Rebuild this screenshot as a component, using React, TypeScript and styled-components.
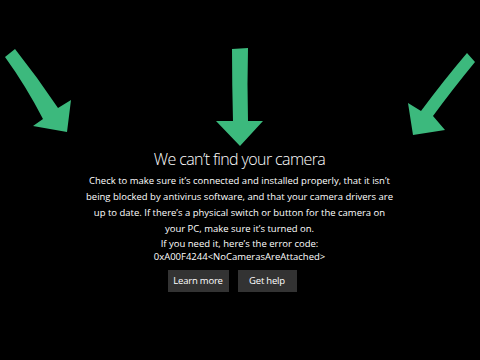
import React from "react";
import styled, { createGlobalStyle } from "styled-components";

const GlobalStyle = createGlobalStyle`
  html, body {
    margin: 0;
    padding: 0;
    background-color: #000;
  }
  body {
    font-family: "Open Sans", "Noto Sans", sans-serif;
    color: #fff;
  }
`;

const Arrows = () => (
  <ArrowSvg width="480" height="150" viewBox="0 0 480 150">
    {/* left arrow */}
    <path d="M5 57 L15 49 Q38 78 58 108 L71 100 L67 132 L33 126 L43 119 Q26 86 5 57 Z" />
    {/* middle arrow */}
    <path d="M232 49 L248 48 Q247 84 248 121 L263 121 L240 146 L216 121 L233 121 Q232 84 232 49 Z" />
    {/* right arrow */}
    <path d="M467 53 L475 62 Q452 90 433 116 L445 130 L413 135 L408 103 L421 111 Q444 80 467 53 Z" />
  </ArrowSvg>
);

const App = () => {
  return (
    <Screen>
      <GlobalStyle />
      <Arrows />
      <Message>
        <Title>We can’t find your camera</Title>
        <Body>
          Check to make sure it’s connected and installed properly, that it isn’t
          <br />
          being blocked by antivirus software, and that your camera drivers are
          <br />
          up to date. If there’s a physical switch or button for the camera on
          <br />
          your PC, make sure it’s turned on.
        </Body>
        <ErrorCode>
          If you need it, here’s the error code:
          <br />
          0xA00F4244&lt;NoCamerasAreAttached&gt;
        </ErrorCode>
        <Buttons>
          <Button $w={61}>Learn more</Button>
          <Button $w={59}>Get help</Button>
        </Buttons>
      </Message>
    </Screen>
  );
};

export default App;

const Screen = styled.div`
  width: 480px;
  height: 360px;
  background-color: #000;
  display: flex;
  flex-direction: column;
  overflow: hidden;
`;

const ArrowSvg = styled.svg`
  display: block;
  flex-shrink: 0;
  fill: #3cb97d;
`;

const Message = styled.div`
  display: flex;
  flex-direction: column;
  align-items: center;
  text-align: center;
  margin-left: -1px;
`;

const Title = styled.h1`
  margin: -1px 0 0;
  font-size: 16px;
  font-weight: 300;
  letter-spacing: -0.6px;
  line-height: 20px;
`;

const Body = styled.p`
  margin: 4px 0 0;
  font-size: 9.5px;
  line-height: 16px;
`;

const ErrorCode = styled.p`
  margin: -0.5px 0 0;
  font-size: 9.5px;
  line-height: 13px;
`;

const Buttons = styled.div`
  display: flex;
  gap: 9px;
  margin: 7px 15px 0 0;
`;

const Button = styled.button<{ $w: number }>`
  width: ${(p) => p.$w}px;
  height: 22px;
  border: none;
  padding: 0;
  background-color: #333;
  color: #fff;
  font-family: "Open Sans", "Noto Sans", sans-serif;
  font-size: 9.5px;
  letter-spacing: -0.2px;
`;
